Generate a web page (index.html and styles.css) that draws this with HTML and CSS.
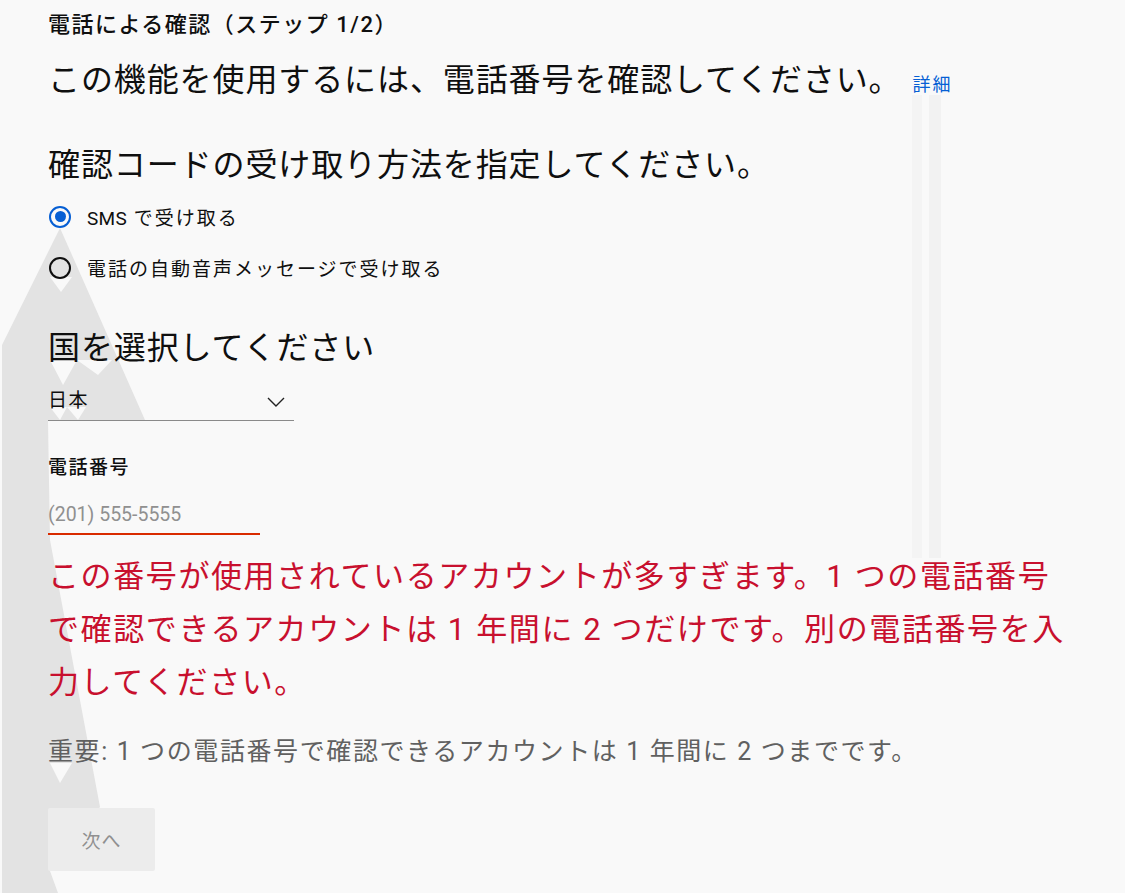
FILE: index.html
```html
<!DOCTYPE html>
<html lang="ja">
<head>
  <meta charset="UTF-8">
  <meta name="viewport" content="width=device-width, initial-scale=1.0">
  <title>電話による確認</title>
  <link rel="stylesheet" href="styles.css">
</head>
<body>
  <svg class="backdrop" width="1125" height="893" viewBox="0 0 1125 893" aria-hidden="true">
    <polygon class="hill" points="60,228 145,420 48,421 50,540 100,807 50,871 58,893 2,893 2,345"/>
    <polygon class="notch" points="50,277 72,277 61,292"/>
    <polygon class="notch" points="50,360 77,360 63,385"/>
    <polygon class="notch" points="77,360 112,360 98,375"/>
    <polygon class="notch" points="50,407 67,407 60,420"/>
    <polygon class="notch" points="67,407 86,407 78,420"/>
    <polygon class="notch" points="50,763 72,763 60,783"/>
    <rect class="stripe" x="912" y="95" width="10" height="463"/>
    <rect class="stripe dark" x="929" y="95" width="12" height="463"/>
  </svg>

  <main class="verify">
    <h2 class="step">電話による確認（ステップ 1/2）</h2>
    <p class="lead">この機能を使用するには、電話番号を確認してください。<a class="more" href="#">詳細</a></p>

    <h3 class="question">確認コードの受け取り方法を指定してください。</h3>
    <div class="options">
      <label class="option">
        <span class="radio checked"></span>
        <span><span class="latin">SMS</span> で受け取る</span>
      </label>
      <label class="option">
        <span class="radio"></span>
        <span>電話の自動音声メッセージで受け取る</span>
      </label>
    </div>

    <h3 class="question country">国を選択してください</h3>
    <div class="select">
      <span class="select-value">日本</span>
      <svg width="18" height="10" viewBox="0 0 18 10"><path d="M1 1l8 8 8-8" fill="none" stroke="#222" stroke-width="1.4"/></svg>
    </div>

    <div class="field-label">電話番号</div>
    <input class="phone" type="tel" placeholder="(201) 555-5555">

    <p class="error">この番号が使用されているアカウントが多すぎます。1 つの電話番号で確認できるアカウントは 1 年間に 2 つだけです。別の電話番号を入力してください。</p>

    <p class="note">重要: 1 つの電話番号で確認できるアカウントは 1 年間に 2 つまでです。</p>

    <button class="next" disabled>次へ</button>
  </main>
</body>
</html>
```

FILE: styles.css
```css
body {
  margin: 0;
  background-color: #f9f9f9;
  font-family: Roboto, "Noto Sans CJK JP", sans-serif;
  color: #0f0f0f;
  width: 1125px;
  height: 893px;
  overflow: hidden;
  position: relative;
}
.backdrop {
  position: absolute;
  left: 0;
  top: 0;
}
.hill {
  fill: #e3e3e3;
}
.notch {
  fill: #f9f9f9;
}
.stripe {
  fill: #f4f4f4;
}
.stripe.dark {
  fill: #f2f2f2;
}
.verify {
  position: relative;
  width: 1030px;
  padding-left: 48px;
}
.step {
  margin: 10px 0 0;
  font-size: 22px;
  font-weight: 500;
  line-height: 30px;
  letter-spacing: 1.5px;
}
.lead {
  margin: 20px 0 0;
  font-size: 32px;
  line-height: 40px;
  letter-spacing: 0.9px;
}
.more {
  margin-left: 11px;
  font-size: 18px;
  letter-spacing: 2px;
  color: #065fd4;
  text-decoration: none;
}
.question {
  margin: 40px 0 0;
  font-size: 32px;
  font-weight: 400;
  line-height: 40px;
  letter-spacing: 0.9px;
}
.options {
  margin-top: 6px;
}
.option {
  display: flex;
  align-items: center;
  gap: 16px;
  height: 51px;
  font-size: 19px;
  letter-spacing: 2px;
}
.latin {
  letter-spacing: 0.3px;
}
.radio {
  width: 22px;
  height: 22px;
  border: 2px solid #0f0f0f;
  border-radius: 50%;
  box-sizing: border-box;
  margin-left: 1px;
  display: flex;
  align-items: center;
  justify-content: center;
}
.radio.checked {
  border-color: #065fd4;
  border-width: 2.5px;
}
.radio.checked::after {
  content: "";
  width: 11px;
  height: 11px;
  border-radius: 50%;
  background-color: #065fd4;
}
.question.country {
  margin-top: 35px;
}
.select {
  margin-top: 15px;
  width: 246px;
  height: 37px;
  border-bottom: 1px solid #8a8a8a;
  display: flex;
  align-items: flex-start;
  justify-content: space-between;
  font-size: 19px;
  line-height: 30px;
  letter-spacing: 1.5px;
}
.select-value {
  padding-top: 3px;
}
.select svg {
  margin: 14px 9px 0 0;
}
.field-label {
  margin-top: 35px;
  font-size: 19px;
  font-weight: 500;
  line-height: 24px;
  letter-spacing: 1.5px;
}
.phone {
  display: block;
  margin: 15px 0 0;
  width: 212px;
  height: 38px;
  padding: 0;
  border: none;
  border-bottom: 2px solid #d92b00;
  background: transparent;
  font-family: Roboto, sans-serif;
  font-size: 19.5px;
  outline: none;
}
.phone::placeholder {
  color: #909090;
}
.error {
  margin: 15px 0 0;
  font-size: 31px;
  line-height: 53px;
  letter-spacing: 1.6px;
  color: #c8102e;
}
.note {
  margin: 25px 0 0;
  font-size: 25px;
  line-height: 36px;
  letter-spacing: 1.6px;
  color: #606060;
}
.next {
  margin-top: 38px;
  width: 107px;
  height: 63px;
  border: none;
  border-radius: 2px;
  background-color: #ececec;
  color: #909090;
  font-family: Roboto, "Noto Sans CJK JP", sans-serif;
  font-size: 19px;
  letter-spacing: 1px;
}
```
